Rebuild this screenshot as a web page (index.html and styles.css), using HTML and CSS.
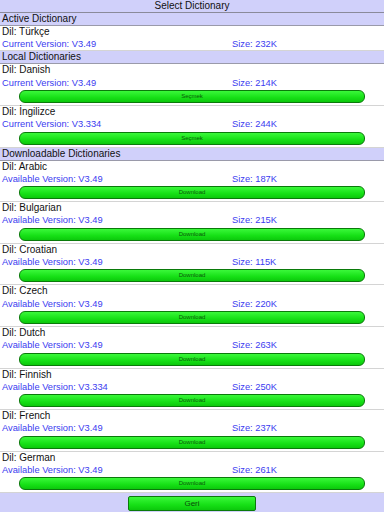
FILE: index.html
```html
<!DOCTYPE html>
<html lang="en">
<head>
    <meta charset="UTF-8">
    <meta name="viewport" content="width=device-width, initial-scale=1.0">
    <title>Select Dictionary</title>
    <link rel="stylesheet" href="styles.css">
</head>
<body>
    <div class="title">Select Dictionary</div>
    <div class="list">
        <div class="head">Active Dictionary</div>
        <div class="item active">
            <div class="name">Dil: Türkçe</div>
            <div class="info"><span>Current Version: V3.49</span><span>Size: 232K</span></div>
        </div>

        <div class="head">Local Dictionaries</div>
        <div class="item">
            <div class="name">Dil: Danish</div>
            <div class="info"><span>Current Version: V3.49</span><span>Size: 214K</span></div>
            <div class="btn">Seçmek</div>
        </div>
        <div class="item">
            <div class="name">Dil: İngilizce</div>
            <div class="info"><span>Current Version: V3.334</span><span>Size: 244K</span></div>
            <div class="btn">Seçmek</div>
        </div>

        <div class="head">Downloadable Dictionaries</div>
        <div class="item">
            <div class="name">Dil: Arabic</div>
            <div class="info"><span>Available Version: V3.49</span><span>Size: 187K</span></div>
            <div class="btn">Download</div>
        </div>
        <div class="item">
            <div class="name">Dil: Bulgarian</div>
            <div class="info"><span>Available Version: V3.49</span><span>Size: 215K</span></div>
            <div class="btn">Download</div>
        </div>
        <div class="item">
            <div class="name">Dil: Croatian</div>
            <div class="info"><span>Available Version: V3.49</span><span>Size: 115K</span></div>
            <div class="btn">Download</div>
        </div>
        <div class="item">
            <div class="name">Dil: Czech</div>
            <div class="info"><span>Available Version: V3.49</span><span>Size: 220K</span></div>
            <div class="btn">Download</div>
        </div>
        <div class="item">
            <div class="name">Dil: Dutch</div>
            <div class="info"><span>Available Version: V3.49</span><span>Size: 263K</span></div>
            <div class="btn">Download</div>
        </div>
        <div class="item">
            <div class="name">Dil: Finnish</div>
            <div class="info"><span>Available Version: V3.334</span><span>Size: 250K</span></div>
            <div class="btn">Download</div>
        </div>
        <div class="item">
            <div class="name">Dil: French</div>
            <div class="info"><span>Available Version: V3.49</span><span>Size: 237K</span></div>
            <div class="btn">Download</div>
        </div>
        <div class="item">
            <div class="name">Dil: German</div>
            <div class="info"><span>Available Version: V3.49</span><span>Size: 261K</span></div>
            <div class="btn">Download</div>
        </div>
    </div>
    <div class="footer">
        <div class="back">Geri</div>
    </div>
</body>
</html>
```

FILE: styles.css
```css
html, body {margin: 0; padding: 0; height: 100%;}
body {background: #fff; font-family: "Liberation Sans", Arial, sans-serif; color: #111; overflow: hidden; display: flex; flex-direction: column;}

.title {height: 12px; line-height: 12px; font-size: 10px; text-align: center; background: #d0d0fa; border-bottom: 1px solid #8a8a9a; flex: none;}

.list {flex: 1; overflow: hidden;}

.head {height: 12px; line-height: 12px; font-size: 10px; padding-left: 2px; background: #d0d0fa; border-bottom: 1px solid #9a9aaa;}

.item {border-bottom: 1px solid #d4d4d4;}
.item .name {height: 12.3px; line-height: 12.3px; font-size: 10px; padding-left: 2px;}
.item .info {height: 12.3px; line-height: 12.3px; font-size: 9.3px; color: #3b3bf0; padding-left: 2px; display: grid; grid-template-columns: 230px 1fr;}
.item.active .name, .item.active .info {height: 12.2px; line-height: 12.2px;}

.btn {height: 11px; line-height: 11px; margin: 1px 19px 2px; border: 1px solid #0a7a0a; border-radius: 6px; background: linear-gradient(#3af83a, #16e016 60%, #0cc80c); font-size: 6px; text-align: center; color: #0a5a0a;}

.footer {height: 19px; flex: none; background: #d0d0fa; display: flex; justify-content: center; padding-top: 3px; box-sizing: border-box;}
.back {width: 126px; height: 13px; line-height: 13px; border: 1px solid #0a7a0a; border-radius: 2px; background: linear-gradient(#3af83a, #16e016 60%, #0cc80c); font-size: 8px; text-align: center; color: #0a4a0a;}
```
